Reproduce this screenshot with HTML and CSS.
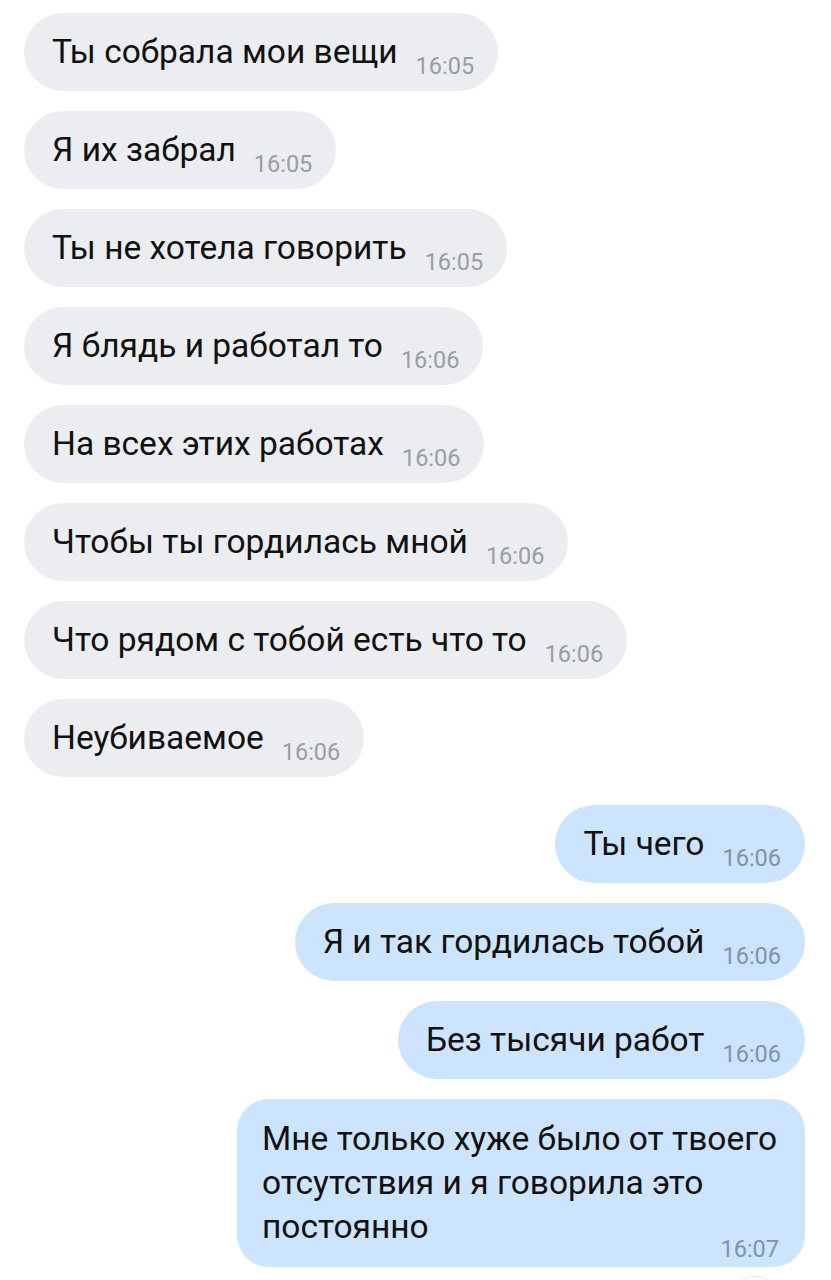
FILE: index.html
```html
<!DOCTYPE html>
<html lang="ru">
<head>
    <meta charset="UTF-8">
    <meta name="viewport" content="width=device-width, initial-scale=1.0">
    <title>Чат</title>
    <link rel="stylesheet" href="styles.css">
</head>
<body>

<div class="chat">
    <div class="msg in"><span class="text">Ты собрала мои вещи</span><span class="time">16:05</span></div>
    <div class="msg in"><span class="text">Я их забрал</span><span class="time">16:05</span></div>
    <div class="msg in"><span class="text">Ты не хотела говорить</span><span class="time">16:05</span></div>
    <div class="msg in"><span class="text">Я блядь и работал то</span><span class="time">16:06</span></div>
    <div class="msg in"><span class="text">На всех этих работах</span><span class="time">16:06</span></div>
    <div class="msg in"><span class="text">Чтобы ты гордилась мной</span><span class="time">16:06</span></div>
    <div class="msg in"><span class="text">Что рядом с тобой есть что то</span><span class="time">16:06</span></div>
    <div class="msg in"><span class="text">Неубиваемое</span><span class="time">16:06</span></div>

    <div class="msg out first-out"><span class="text">Ты чего</span><span class="time">16:06</span></div>
    <div class="msg out"><span class="text">Я и так гордилась тобой</span><span class="time">16:06</span></div>
    <div class="msg out"><span class="text">Без тысячи работ</span><span class="time">16:06</span></div>
    <div class="msg out long">
        <div class="text">Мне только хуже было от твоего отсутствия и я говорила это постоянно<span class="time">16:07</span></div>
    </div>
</div>

<div class="scroll-btn"></div>

</body>
</html>
```

FILE: styles.css
```css
body { margin: 0; background: #fff; font-family: Roboto, "Noto Sans", sans-serif; color: #111; overflow: hidden; }
.chat { display: flex; flex-direction: column; align-items: flex-start; gap: 20px; padding: 13px 26px 0 24px; }

.msg { box-sizing: border-box; height: 78px; padding: 17px 24px 17px 28px; border-radius: 39px; font-size: 33.5px; line-height: 44px; white-space: nowrap; }
.msg .time { margin-left: 18px; font-size: 23.5px; line-height: 24px; vertical-align: -11px; }

.in { background: #ebedf0; }
.in .time { color: #9a9ea4; }

.out { align-self: flex-end; background: #cce4fd; }
.out .time { color: #7e93aa; }
.first-out { margin-top: 8px; }

.long { height: auto; max-width: 568px; padding: 18px 26px 6px 25px; border-radius: 32px; white-space: normal; }
.long .text { display: flow-root; }
.long .time { float: right; margin: 32px 0 0; vertical-align: baseline; }

.scroll-btn { position: absolute; left: 730px; top: 1276px; width: 48px; height: 48px; border-radius: 50%; border: 1px solid #e6e8eb; background: #fff; }
```
